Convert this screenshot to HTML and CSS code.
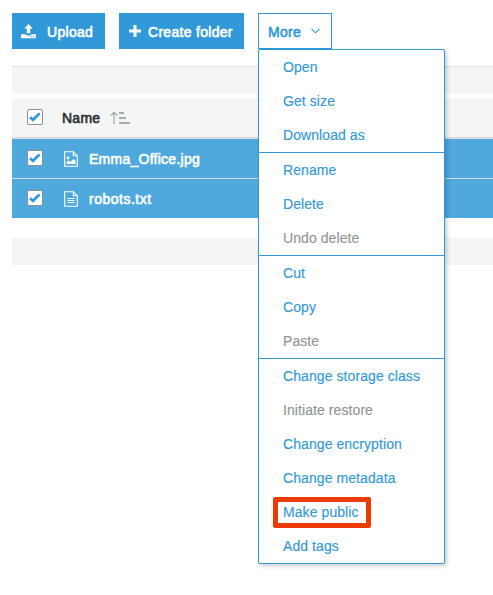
FILE: index.html
```html
<!DOCTYPE html>
<html lang="en">
<head>
<meta charset="utf-8">
<title>Bucket objects</title>
<link rel="stylesheet" href="styles.css">
</head>
<body>
<svg class="defs" aria-hidden="true">
  <symbol id="check" viewBox="0 0 16 16"><rect x=".5" y=".5" width="15" height="15" rx="1.5" fill="#fff" stroke="#8c9091"/><path d="M3 8.2l3 2.6 6.6-6.4" fill="none" stroke="#3199d8" stroke-width="2.7"/></symbol>
  <symbol id="page" viewBox="0 0 14 16"><path d="M.7.7h8.6l4 4v10.6H.7zM9.3.7v4h4" fill="none" stroke="#fff" stroke-width="1.1"/></symbol>
</svg>
<div class="toolbar">
  <button class="btn upload"><svg width="15" height="15" viewBox="0 0 15 15"><path d="M7.5 0l4.2 4.6H9.2v4.6H5.8V4.6H3.3zM0 10.2h4.6c.3 1 1.2 1.4 2.9 1.4s2.6-.4 2.9-1.4H15v4H0z" fill="#fff"/><path d="M10.2 12.6h1m1.2 0h1" stroke="#3199d8"/></svg><span>Upload</span></button>
  <button class="btn create"><svg width="12" height="12" viewBox="0 0 12 12"><path d="M6 0v12M0 6h12" stroke="#fff" stroke-width="3"/></svg><span>Create folder</span></button>
  <div class="more-wrap">
    <button class="btn more"><span>More</span><svg width="9" height="6" viewBox="0 0 9 6"><path d="M.5.8l4 4 4-4" fill="none" stroke="#3199d8" stroke-width="1.1"/></svg></button>
    <div class="menu">
      <div class="group"><a>Open</a><a>Get size</a><a>Download as</a></div>
      <div class="group"><a>Rename</a><a>Delete</a><a class="off">Undo delete</a></div>
      <div class="group"><a>Cut</a><a>Copy</a><a class="off">Paste</a></div>
      <div class="group"><a>Change storage class</a><a class="off">Initiate restore</a><a>Change encryption</a><a>Change metadata</a><a class="marked">Make public</a><a>Add tags</a></div>
    </div>
  </div>
</div>
<div class="list">
  <div class="band top"></div>
  <div class="row head"><svg class="box"><use href="#check"/></svg><span>Name</span><svg class="sort" width="20" height="14" viewBox="0 0 20 14"><path d="M4 13V1.5M.7 4.5L4 1.2l3.3 3.3" fill="none" stroke="#a5abab" stroke-width="1.3"/><path d="M9 2h5M9 7h7M9 12h11" stroke="#a5abab" stroke-width="2"/></svg></div>
  <div class="row file"><svg class="box"><use href="#check"/></svg><svg class="page" viewBox="0 0 14 16"><use href="#page"/><circle cx="4" cy="7" r="1.4" fill="#fff"/><path d="M2.5 13v-2l2-1.5 2 1.2 3-2.7 2 2v3z" fill="#fff"/></svg><span>Emma_Office.jpg</span></div>
  <div class="row file last"><svg class="box"><use href="#check"/></svg><svg class="page" viewBox="0 0 14 16"><use href="#page"/><path d="M3.5 7.5h7M3.5 9.5h7M3.5 11.5h7" stroke="#fff" stroke-width="1.1"/></svg><span>robots.txt</span></div>
  <div class="band bottom"></div>
</div>
</body>
</html>
```
FILE: styles.css
```css
*, *::after { box-sizing: border-box; }
body {
  margin: 0;
  padding: 13px 0 0 12px;
  height: 595px;
  overflow: hidden;
  background: #fff;
  font: 14px/34px "Liberation Sans", Arial, sans-serif;
}
.defs { position: absolute; width: 0; height: 0; }
.toolbar { display: flex; gap: 14px; }
.btn {
  display: flex;
  align-items: center;
  height: 36px;
  padding: 0 0 0 9px;
  border: 0;
  background: #3199d8;
  color: #fff;
  font: inherit;
  letter-spacing: .3px;
  white-space: nowrap;
  -webkit-text-stroke: .6px currentColor;
}
.btn span { position: relative; top: 1px; }
.btn svg { flex: none; }
.upload { width: 93px; gap: 11px; }
.create { width: 125px; padding-left: 10px; gap: 7px; }
.more-wrap { position: relative; }
.more { width: 74px; gap: 10px; border: 1px solid #3199d8; background: #fff; color: #3199d8; }
.menu {
  position: absolute;
  top: 36px;
  left: 0;
  z-index: 1;
  width: 187px;
  border: 1px solid #3199d8;
  border-radius: 2px;
  background: #fff;
  box-shadow: 2px 2px 4px rgba(0, 0, 0, .2);
}
.group + .group { border-top: 1px solid #3199d8; }
.group a {
  display: block;
  height: 34px;
  padding-left: 24px;
  color: #3199d8;
  letter-spacing: .08px;
  -webkit-text-stroke: .15px currentColor;
}
.group a.off { color: #8f9596; }
.marked { position: relative; }
.marked::after {
  content: "";
  position: absolute;
  left: 14px;
  top: 2px;
  width: 98px;
  height: 31px;
  border: 5px solid #eb3b00;
  border-radius: 2px;
}
.list { margin-top: 17px; }
.band { height: 27px; background: #f4f6f6; }
.top { height: 28px; margin-bottom: 4px; border-top: 1px solid #e2e3e3; }
.bottom { margin-top: 20px; }
.row {
  display: flex;
  align-items: center;
  padding-left: 15px;
  letter-spacing: .26px;
  -webkit-text-stroke: .6px currentColor;
}
.head { height: 41px; border-bottom: 2px solid #d9dbdc; background: #f4f6f6; color: #2b2f30; }
.file { height: 40px; border-bottom: 1px solid #d7dcdf; background: #4fa9dd; color: #fff; }
.last { height: 39px; border-bottom: 0; letter-spacing: .5px; }
.box { width: 16px; height: 16px; margin: 0 19px 2px 0; }
.file .box { margin-right: 21px; }
.page { width: 14px; height: 16px; margin-right: 11px; }
.sort { margin-left: 10px; }
```
